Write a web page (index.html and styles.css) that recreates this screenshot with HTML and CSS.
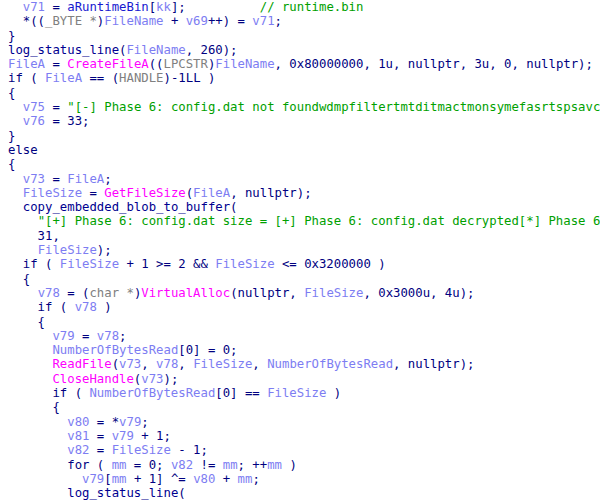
FILE: index.html
```html
<!DOCTYPE html>
<html>
<head>
<meta charset="utf-8">
<link rel="stylesheet" href="styles.css">
</head>
<body>
<div class="code">
<div class="ln">  <span class="v">v71</span> = <span class="g">aRuntimeBin</span>[<span class="v">kk</span>];          <span class="s">// runtime.bin</span></div>
<div class="ln">  *((<span class="t">_BYTE *</span>)<span class="v">FileName</span> + <span class="v">v69</span>++) = <span class="v">v71</span>;</div>
<div class="ln">}</div>
<div class="ln"><span class="f">log_status_line</span>(<span class="v">FileName</span>, 260);</div>
<div class="ln"><span class="v">FileA</span> = <span class="m">CreateFileA</span>((<span class="t">LPCSTR</span>)<span class="v">FileName</span>, 0x80000000, 1u, nullptr, 3u, 0, nullptr);</div>
<div class="ln">if ( <span class="v">FileA</span> == (<span class="t">HANDLE</span>)-1LL )</div>
<div class="ln">{</div>
<div class="ln">  <span class="v">v75</span> = <span class="s">"[-] Phase 6: config.dat not foundwdmpfiltertmtditmactmonsymefasrtspsavcebm"</span>;</div>
<div class="ln">  <span class="v">v76</span> = 33;</div>
<div class="ln">}</div>
<div class="ln">else</div>
<div class="ln">{</div>
<div class="ln">  <span class="v">v73</span> = <span class="v">FileA</span>;</div>
<div class="ln">  <span class="v">FileSize</span> = <span class="m">GetFileSize</span>(<span class="v">FileA</span>, nullptr);</div>
<div class="ln">  <span class="f">copy_embedded_blob_to_buffer</span>(</div>
<div class="ln">    <span class="s">"[+] Phase 6: config.dat size = [+] Phase 6: config.dat decrypted[*] Phase 6: "</span>,</div>
<div class="ln">    31,</div>
<div class="ln">    <span class="v">FileSize</span>);</div>
<div class="ln">  if ( <span class="v">FileSize</span> + 1 &gt;= 2 &amp;&amp; <span class="v">FileSize</span> &lt;= 0x3200000 )</div>
<div class="ln">  {</div>
<div class="ln">    <span class="v">v78</span> = (<span class="t">char *</span>)<span class="m">VirtualAlloc</span>(nullptr, <span class="v">FileSize</span>, 0x3000u, 4u);</div>
<div class="ln">    if ( <span class="v">v78</span> )</div>
<div class="ln">    {</div>
<div class="ln">      <span class="v">v79</span> = <span class="v">v78</span>;</div>
<div class="ln">      <span class="v">NumberOfBytesRead</span>[0] = 0;</div>
<div class="ln">      <span class="m">ReadFile</span>(<span class="v">v73</span>, <span class="v">v78</span>, <span class="v">FileSize</span>, <span class="v">NumberOfBytesRead</span>, nullptr);</div>
<div class="ln">      <span class="m">CloseHandle</span>(<span class="v">v73</span>);</div>
<div class="ln">      if ( <span class="v">NumberOfBytesRead</span>[0] == <span class="v">FileSize</span> )</div>
<div class="ln">      {</div>
<div class="ln">        <span class="v">v80</span> = *<span class="v">v79</span>;</div>
<div class="ln">        <span class="v">v81</span> = <span class="v">v79</span> + 1;</div>
<div class="ln">        <span class="v">v82</span> = <span class="v">FileSize</span> - 1;</div>
<div class="ln">        for ( <span class="v">mm</span> = 0; <span class="v">v82</span> != <span class="v">mm</span>; ++<span class="v">mm</span> )</div>
<div class="ln">          <span class="v">v79</span>[<span class="v">mm</span> + 1] ^= <span class="v">v80</span> + <span class="v">mm</span>;</div>
<div class="ln">        <span class="f">log_status_line</span>(</div>
</div>
</body>
</html>
```
FILE: styles.css
```css
html, body {
  margin: 0;
  padding: 0;
  background: #ffffff;
  overflow: hidden;
}
.code {
  padding: 0 0 0 8px;
  font-family: "DejaVu Sans Mono", "Liberation Mono", monospace;
  font-size: 12.3px;
  line-height: 14.3px;
  color: #000080;
  width: 592px;
  overflow: hidden;
}
.ln {
  height: 14.3px;
  white-space: pre;
}
.v { color: #7d7df2; }
.g { color: #1818d0; }
.f { color: #000090; }
.s { color: #00a000; }
.m { color: #ff00ff; }
.t { color: #808080; }
```
